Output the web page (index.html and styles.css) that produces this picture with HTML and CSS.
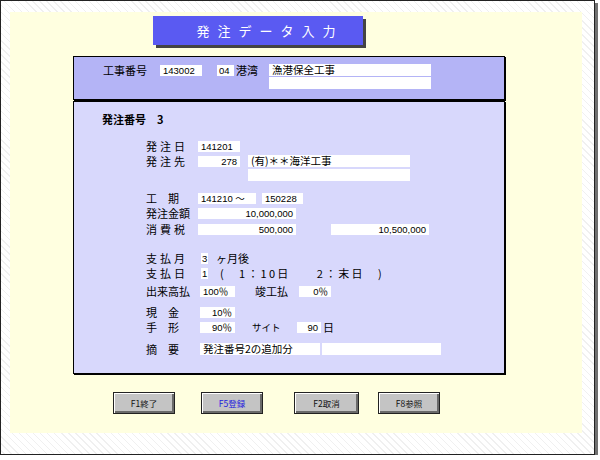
FILE: index.html
```html
<!DOCTYPE html>
<html lang="ja">
<head>
<meta charset="utf-8">
<title>発注データ入力</title>
<link rel="stylesheet" href="styles.css">
</head>
<body>
<div class="screen">
  <div class="paper">
    <div class="title">発注データ入力</div>

    <div class="head-panel">
      <div class="hrow">
        <span class="hlabel">工事番号</span>
        <span class="fld w42">143002</span>
        <span class="fld code">04</span>
        <span class="kind">港湾</span>
        <span class="fld name">漁港保全工事</span>
      </div>
      <div class="hrow2"><span class="fld name"></span></div>
    </div>

    <div class="main-panel">
      <div class="row order">
        <span class="olabel">発注番号</span><span class="onum">3</span>
      </div>

      <div class="row r-date">
        <span class="lbl sp3">発注日</span>
        <span class="fld w42">141201</span>
      </div>
      <div class="row r-dest">
        <span class="lbl sp3">発注先</span>
        <span class="fld w42 right">278</span>
        <span class="fld dest">(有)＊＊海洋工事</span>
      </div>
      <div class="row r-dest2">
        <span class="lbl"></span>
        <span class="fld dest2"></span>
      </div>

      <div class="row r-term">
        <span class="lbl spk">工　期</span>
        <span class="fld term1">141210 ～</span>
        <span class="fld term2">150228</span>
      </div>
      <div class="row r-amt">
        <span class="lbl">発注金額</span>
        <span class="fld amt right">10,000,000</span>
      </div>
      <div class="row r-tax">
        <span class="lbl sp3">消費税</span>
        <span class="fld amt right">500,000</span>
        <span class="fld total right">10,500,000</span>
      </div>

      <div class="row r-pm">
        <span class="lbl sp3">支払月</span>
        <span class="fld one">3</span>
        <span class="txt pm-t">ヶ月後</span>
      </div>
      <div class="row r-pd">
        <span class="lbl sp3">支払日</span>
        <span class="fld one">1</span>
        <span class="txt pd-t">(　1：10日　　2：末日　)</span>
      </div>

      <div class="row r-prog">
        <span class="lbl">出来高払</span>
        <span class="fld pct">100％</span>
        <span class="txt done">竣工払</span>
        <span class="fld pct2 right">0％</span>
      </div>

      <div class="row r-cash">
        <span class="lbl spk">現　金</span>
        <span class="fld pct right">10％</span>
      </div>
      <div class="row r-bill">
        <span class="lbl spk">手　形</span>
        <span class="fld pct right">90％</span>
        <span class="txt site">サイト</span>
        <span class="fld days right">90</span>
        <span class="txt day">日</span>
      </div>

      <div class="row r-memo">
        <span class="lbl spk">摘　要</span>
        <span class="fld memo1">発注番号2の追加分</span>
        <span class="fld memo2"></span>
      </div>
    </div>

    <div class="buttons">
      <button class="btn b1">F1終了</button>
      <button class="btn b2 blue">F5登録</button>
      <button class="btn b3">F2取消</button>
      <button class="btn b4">F8参照</button>
    </div>
  </div>
</div>
</body>
</html>
```
FILE: styles.css
```css
* { box-sizing: border-box; }
html, body { margin: 0; padding: 0; background: #ffffff; }
body {
  font-family: "Noto Sans CJK JP", "Liberation Sans", sans-serif;
  font-size: 11px;
  color: #000;
}
.screen {
  width: 595px;
  height: 455px;
  border: 1px solid #222;
  box-shadow: 3px 3px 0 #707070;
  background:
    repeating-linear-gradient(45deg, #ffffff 0 2px, #f0f0f0 2px 3px, #ffffff 3px 5px),
    #fafafa;
  padding: 11px 12px 21px 9px;
}
.paper {
  width: 100%;
  height: 100%;
  background: #ffffe0;
  padding-top: 4px;
  display: flex;
  flex-direction: column;
}
.title {
  margin-left: 143px;
  width: 210px;
  height: 29px;
  background: #5a5af2;
  color: #fff;
  font-size: 13px;
  letter-spacing: 8px;
  text-indent: 24px;
  line-height: 29px;
  text-align: center;
  box-shadow: 3px 3px 0 #444;
}
.head-panel {
  margin-top: 11px;
  margin-left: 63px;
  width: 432px;
  height: 44px;
  background: #b4b4f6;
  border: 1px solid #000;
  box-shadow: 1px 1px 0 #000;
  padding-top: 7px;
}
.hrow { display: flex; align-items: center; height: 12px; line-height: 12px; padding-left: 29px; }
.hlabel { width: 57px; font-size: 11px; white-space: nowrap; }
.hrow2 { display: flex; margin-top: 1px; padding-left: 195px; }
.fld {
  display: inline-block;
  flex: none;
  background: #fff;
  height: 11px;
  line-height: 11px;
  font-family: "Liberation Sans", "Noto Sans CJK JP", sans-serif;
  font-size: 9.5px;
  padding: 0 3px;
  white-space: nowrap;
}
.fld.right { text-align: right; }
.w42 { width: 42px; }
.code { margin-left: 15px; width: 17px; padding: 0 2px; }
.kind { width: 35px; padding-left: 2px; white-space: nowrap; }
.name { width: 162px; font-family: "Noto Sans CJK JP", sans-serif; font-size: 10.5px; height: 12px; line-height: 12px; }

.main-panel {
  margin-top: 1px;
  margin-left: 63px;
  width: 432px;
  height: 273px;
  background: #d8d8fc;
  border: 1px solid #000;
  box-shadow: 1px 1px 0 #000;
  padding-top: 10px;
  padding-left: 72px;
}
.row { display: flex; align-items: center; height: 14px; line-height: 14px; white-space: nowrap; }
.order { margin-left: -44px; font-weight: bold; }
.olabel { width: 55px; }
.onum { margin-left: 0; }
.lbl { width: 52px; flex: none; }
.sp3 { letter-spacing: 3px; }
.spk { letter-spacing: 0; }
.r-date { margin-top: 13px; }
.r-dest { margin-top: 1px; }
.dest { margin-left: 8px; width: 162px; font-family: "Noto Sans CJK JP", sans-serif; font-size: 10.5px; height: 12px; line-height: 12px; }
.r-dest2 { height: 13px; }
.dest2 { margin-left: 50px; width: 162px; height: 12px; }
.r-term { margin-top: 10px; }
.term1 { width: 58px; }
.term2 { margin-left: 6px; width: 41px; }
.r-amt { margin-top: 1px; }
.amt { width: 98px; }
.r-tax { margin-top: 2px; }
.total { margin-left: 35px; width: 98px; }
.r-pm { margin-top: 15px; }
.r-pd { margin-top: 1px; }
.one { margin-left: 3px; width: 7px; padding: 0 1px; }
.txt { font-size: 11px; }
.pm-t { margin-left: 8px; }
.pd-t { margin-left: 12px; letter-spacing: 2.2px; }
.r-prog { margin-top: 4px; }
.pct { margin-left: 2px; width: 35px; }
.done { margin-left: 20px; width: 44px; }
.pct2 { width: 32px; }
.r-cash { margin-top: 7px; }
.r-bill { margin-top: 1px; }
.site { margin-left: 17px; width: 45px; font-size: 9.5px; }
.days { width: 24px; }
.day { margin-left: 2px; }
.r-memo { margin-top: 8px; }
.memo1 { margin-left: 2px; width: 120px; font-family: "Noto Sans CJK JP", sans-serif; font-size: 10.5px; height: 12px; line-height: 12px; }
.memo2 { margin-left: 2px; width: 119px; height: 12px; }

.buttons { display: flex; margin-top: 18px; padding-left: 103px; }
.btn {
  height: 22px;
  width: 62px;
  background: #c4c4c4;
  border: 1px solid #222;
  box-shadow: inset 1px 1px 0 #fff, inset -2px -2px 0 #6a6a6a;
  font-family: "Noto Sans CJK JP", sans-serif;
  font-size: 8.5px;
  color: #111;
  padding: 0;
}
.btn.blue { color: #2222dd; }
.b2 { margin-left: 26px; }
.b3 { margin-left: 31px; width: 65px; }
.b4 { margin-left: 19px; }
```
